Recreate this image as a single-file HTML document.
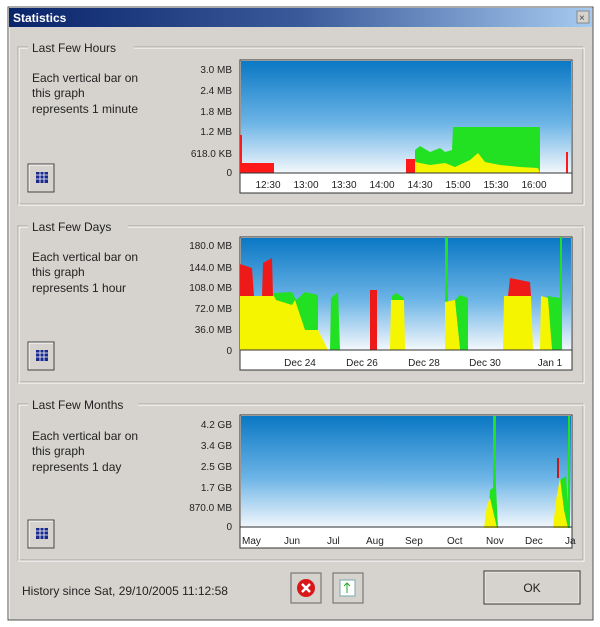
<!DOCTYPE html>
<html><head><style>
html,body{margin:0;padding:0;background:#fff;width:600px;height:627px;overflow:hidden}
svg{display:block}
text{font-family:"Liberation Sans",sans-serif;fill:#222}
</style></head><body>
<svg width="600" height="627" viewBox="0 0 600 627" xmlns="http://www.w3.org/2000/svg">
<defs>
<linearGradient id="tb" x1="0" x2="1" y1="0" y2="0"><stop offset="0" stop-color="#0a246a"/><stop offset="0.5" stop-color="#3a5a9a"/><stop offset="1" stop-color="#a6caf0"/></linearGradient>
<linearGradient id="sky" x1="0" x2="0" y1="0" y2="1"><stop offset="0" stop-color="#0a78c4"/><stop offset="0.55" stop-color="#6cb4e6"/><stop offset="1" stop-color="#f4f8fc"/></linearGradient>
</defs>
<rect x="0" y="0" width="600" height="627" fill="#fff"/>
<!-- window -->
<rect x="8" y="7" width="585" height="613" fill="#d6d3ce" stroke="#555"/>
<path d="M9 619 V8 H592" fill="none" stroke="#fff"/>
<rect x="9" y="8" width="583" height="19" fill="url(#tb)"/>
<text x="13" y="22" font-size="12" font-weight="bold" style="fill:#fff">Statistics</text>
<rect x="577" y="11" width="12" height="12" fill="#d6d3ce" stroke="#888"/>
<text x="579" y="21" font-size="10" style="fill:#444">×</text>

<!-- group boxes -->
<g fill="none" stroke="#a8a5a0">
<rect x="18" y="47" width="565" height="157"/>
<rect x="18" y="226" width="565" height="156"/>
<rect x="18" y="404" width="565" height="156"/>
</g>
<g fill="none" stroke="#fff"><rect x="19" y="48" width="565" height="157"/><rect x="19" y="227" width="565" height="156"/><rect x="19" y="405" width="565" height="156"/></g>
<g fill="#d6d3ce"><rect x="28" y="40" width="106" height="14"/><rect x="28" y="219" width="100" height="14"/><rect x="28" y="397" width="110" height="14"/></g>
<text x="32" y="52" font-size="12">Last Few Hours</text>
<text x="32" y="231" font-size="12">Last Few Days</text>
<text x="32" y="409" font-size="12">Last Few Months</text>

<g font-size="12">
<text x="32" y="82">Each vertical bar on</text><text x="32" y="97">this graph</text><text x="32" y="113">represents 1 minute</text>
<text x="32" y="261">Each vertical bar on</text><text x="32" y="276">this graph</text><text x="32" y="292">represents 1 hour</text>
<text x="32" y="440">Each vertical bar on</text><text x="32" y="455">this graph</text><text x="32" y="471">represents 1 day</text>
</g>

<!-- table buttons -->
<g>
<rect x="28" y="164" width="26" height="28" fill="#d6d3ce" stroke="#444"/><path d="M29 191V165H53" fill="none" stroke="#fff"/><rect x="36" y="172" width="12" height="11" fill="#1a2a8a"/>
<rect x="28" y="342" width="26" height="28" fill="#d6d3ce" stroke="#444"/><path d="M29 369V343H53" fill="none" stroke="#fff"/><rect x="36" y="350" width="12" height="11" fill="#1a2a8a"/>
<rect x="28" y="520" width="26" height="28" fill="#d6d3ce" stroke="#444"/><path d="M29 547V521H53" fill="none" stroke="#fff"/><rect x="36" y="528" width="12" height="11" fill="#1a2a8a"/>
<g stroke="#fff" stroke-width="0.8"><path d="M36 175h12M36 179h12M40 172v11M44 172v11M36 353h12M36 357h12M40 350v11M44 350v11M36 531h12M36 535h12M40 528v11M44 528v11"/></g>
</g>

<!-- Graph 1 -->
<rect x="240" y="60" width="332" height="133" fill="#fff" stroke="#333"/>
<rect x="241" y="61" width="330" height="112" fill="url(#sky)"/>
<g fill="#ff1a1a"><rect x="242" y="163" width="32" height="10"/><rect x="406" y="159" width="9" height="14"/><rect x="566" y="152" width="2" height="21"/><rect x="240" y="135" width="2" height="38"/></g>
<path d="M415 173 L415 150 L420 146 L430 152 L440 148 L445 152 L452 150 L453 127 L540 127 L540 173Z" fill="#22e022"/>
<path d="M415 173 L415 162 L430 165 L445 163 L455 167 L470 160 L478 153 L485 162 L500 165 L520 167 L538 168 L540 173Z" fill="#f5f500"/>
<line x1="240" y1="173" x2="572" y2="173" stroke="#333"/>
<g font-size="10" text-anchor="end"><text x="232" y="73">3.0 MB</text><text x="232" y="94">2.4 MB</text><text x="232" y="115">1.8 MB</text><text x="232" y="135">1.2 MB</text><text x="232" y="157">618.0 KB</text><text x="232" y="176">0</text></g>
<g font-size="10" text-anchor="middle"><text x="268" y="188">12:30</text><text x="306" y="188">13:00</text><text x="344" y="188">13:30</text><text x="382" y="188">14:00</text><text x="420" y="188">14:30</text><text x="458" y="188">15:00</text><text x="496" y="188">15:30</text><text x="534" y="188">16:00</text></g>

<!-- Graph 2 -->
<rect x="240" y="237" width="332" height="133" fill="#fff" stroke="#333"/>
<rect x="241" y="238" width="330" height="112" fill="url(#sky)"/>
<g fill="#ee1a1a"><path d="M240 296 L240 264 L252 268 L254 296Z"/><path d="M262 296 L263 263 L272 258 L273 296Z"/><rect x="370" y="290" width="7" height="60"/><path d="M508 296 L510 278 L530 282 L531 296Z"/></g>
<g fill="#22e022"><path d="M274 293 L292 292 L296 300 L305 292 L318 295 L318 330 L305 330 L292 305 L274 300Z"/><path d="M330 350 L331 298 L338 292 L340 350Z"/><path d="M392 296 L396 293 L404 298 L404 300 L392 300Z"/><rect x="445" y="237" width="3" height="113"/><path d="M455 300 L460 295 L468 298 L468 350 L460 350Z"/><path d="M547 296 L560 298 L562 350 L552 350Z"/><rect x="560" y="237" width="2" height="113"/></g>
<g fill="#f5f500"><path d="M240 350 L240 296 L274 296 L276 300 L292 305 L295 300 L305 330 L318 330 L328 350Z"/><path d="M390 350 L391 300 L404 300 L405 350Z"/><path d="M445 350 L445 302 L455 300 L460 350Z"/><path d="M503 350 L504 296 L531 296 L533 350Z"/><path d="M540 350 L541 296 L548 298 L552 350Z"/></g>
<line x1="240" y1="350" x2="572" y2="350" stroke="#333"/>
<g font-size="10" text-anchor="end"><text x="232" y="249">180.0 MB</text><text x="232" y="271">144.0 MB</text><text x="232" y="291">108.0 MB</text><text x="232" y="312">72.0 MB</text><text x="232" y="333">36.0 MB</text><text x="232" y="354">0</text></g>
<g font-size="10" text-anchor="middle"><text x="300" y="366">Dec 24</text><text x="362" y="366">Dec 26</text><text x="424" y="366">Dec 28</text><text x="485" y="366">Dec 30</text><text x="550" y="366">Jan 1</text></g>

<!-- Graph 3 -->
<rect x="240" y="415" width="332" height="133" fill="#fff" stroke="#333"/>
<rect x="241" y="416" width="330" height="112" fill="url(#sky)"/>
<g fill="#22e022"><rect x="493" y="416" width="3" height="112"/><rect x="568" y="416" width="2" height="112"/><path d="M488 528 L490 490 L496 486 L498 528Z"/><path d="M558 528 L560 480 L566 476 L570 528Z"/></g>
<g fill="#f5f500"><path d="M484 528 L487 505 L490 498 L494 515 L497 528Z"/><path d="M553 528 L556 500 L560 478 L564 510 L568 528Z"/></g>
<rect x="557" y="458" width="2" height="20" fill="#c01a1a"/>
<line x1="240" y1="527" x2="572" y2="527" stroke="#333"/>
<g font-size="10" text-anchor="end"><text x="232" y="428">4.2 GB</text><text x="232" y="449">3.4 GB</text><text x="232" y="470">2.5 GB</text><text x="232" y="491">1.7 GB</text><text x="232" y="511">870.0 MB</text><text x="232" y="530">0</text></g>
<g font-size="10"><text x="242" y="544">May</text><text x="284" y="544">Jun</text><text x="327" y="544">Jul</text><text x="366" y="544">Aug</text><text x="405" y="544">Sep</text><text x="447" y="544">Oct</text><text x="486" y="544">Nov</text><text x="525" y="544">Dec</text><text x="565" y="544">Ja</text></g>

<!-- bottom -->
<text x="22" y="595" font-size="12">History since Sat, 29/10/2005 11:12:58</text>
<rect x="291" y="573" width="30" height="30" fill="#d6d3ce" stroke="#666"/>
<circle cx="306" cy="588" r="9" fill="#d81818"/><path d="M302 584 L310 592 M310 584 L302 592" stroke="#fff" stroke-width="2.5"/>
<rect x="333" y="573" width="30" height="30" fill="#d6d3ce" stroke="#666"/>
<rect x="340" y="580" width="15" height="16" fill="#fff" stroke="#7aa"/><path d="M347 583 v10 M344 586 l3 -3 3 3" stroke="#2a2" fill="none"/>
<rect x="484" y="571" width="96" height="33" fill="#d6d3ce" stroke="#333"/>
<rect x="485" y="572" width="94" height="31" fill="none" stroke="#fff" stroke-opacity="0.6"/>
<text x="532" y="592" font-size="12" text-anchor="middle">OK</text>
</svg>
</body></html>
